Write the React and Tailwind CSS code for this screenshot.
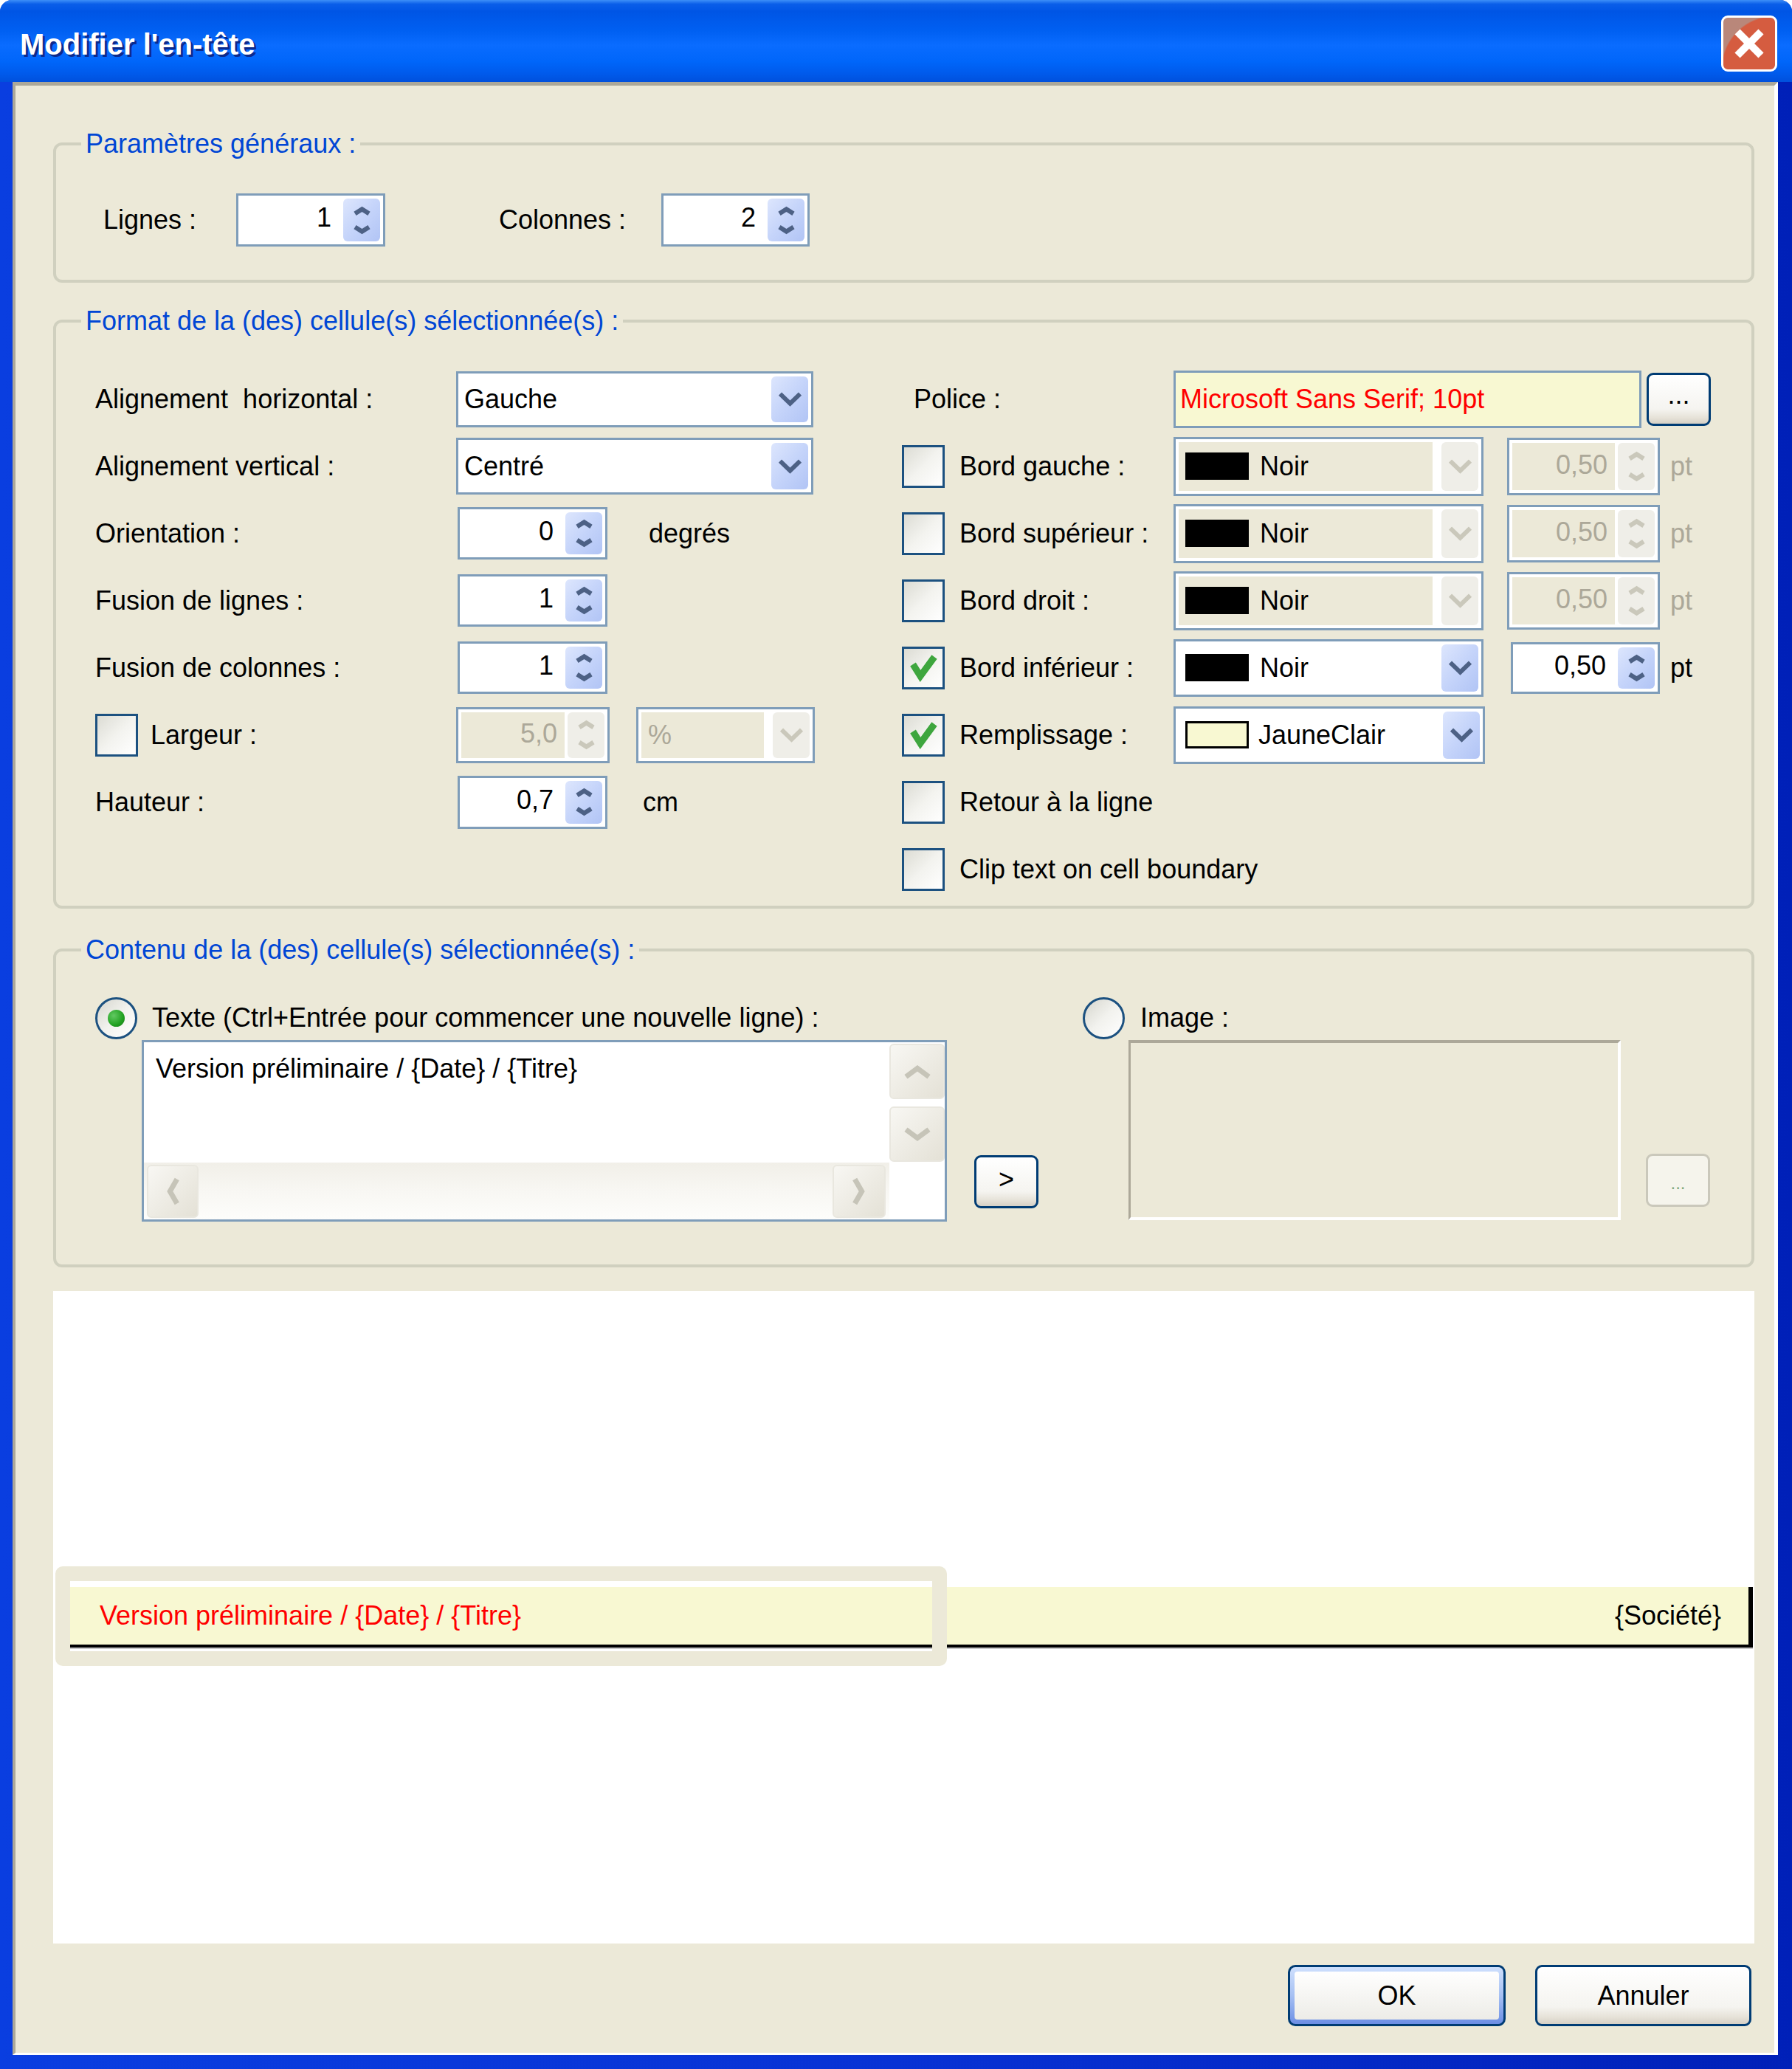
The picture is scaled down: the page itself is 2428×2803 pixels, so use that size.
import React from 'react';

const FONT = "font-['Liberation_Sans',Arial,sans-serif]";

// XP style chevron, drawn from the box size
function Chevron({ dir = 'down', w = 28, h = 18, stroke = 6, color = '#4d6185' }) {
  const a = stroke * 0.5;
  const b = stroke * 0.6;
  const t = stroke * 0.9;
  const paths = {
    down: `M${a} ${b} L${w / 2} ${h - t} L${w - a} ${b}`,
    up: `M${a} ${h - b} L${w / 2} ${t} L${w - a} ${h - b}`,
    left: `M${w - b} ${a} L${t} ${h / 2} L${w - b} ${h - a}`,
    right: `M${b} ${a} L${w - t} ${h / 2} L${b} ${h - a}`,
  };
  return (
    <svg width={w} height={h} viewBox={`0 0 ${w} ${h}`} className="overflow-visible">
      <path d={paths[dir]} fill="none" stroke={color} strokeWidth={stroke} strokeLinejoin="miter" />
    </svg>
  );
}

function SpinBox({ value, size, disabled }) {
  if (disabled) {
    return (
      <div className={`flex shrink-0 border-[3px] border-[#7f9db9] bg-white p-[4px] ${size}`}>
        <div className="flex flex-1 items-center justify-end bg-[#ece9d8] pr-[10px] pb-[4px] text-[#aca899]">{value}</div>
        <div className="ml-[4px] flex w-[50px] flex-col rounded-[6px] bg-[#efeee8]">
          <div className="flex flex-1 items-center justify-center pt-[3px]">
            <Chevron dir="up" w={25} h={15} stroke={6} color="#cac8bb" />
          </div>
          <div className="flex flex-1 items-center justify-center pb-[3px]">
            <Chevron dir="down" w={25} h={15} stroke={6} color="#cac8bb" />
          </div>
        </div>
      </div>
    );
  }
  return (
    <div className={`flex shrink-0 border-[3px] border-[#7f9db9] bg-white ${size}`}>
      <div className="flex flex-1 items-center justify-end pr-[16px] pb-[6px]">{value}</div>
      <div className="my-[4px] mr-[4px] flex w-[50px] flex-col rounded-[6px] bg-gradient-to-br from-[#dde6fd] via-[#c5d4fa] to-[#b1c4f5]">
        <div className="flex flex-1 items-center justify-center pt-[3px]">
          <Chevron dir="up" w={25} h={15} stroke={6} />
        </div>
        <div className="flex flex-1 items-center justify-center pb-[3px]">
          <Chevron dir="down" w={25} h={15} stroke={6} />
        </div>
      </div>
    </div>
  );
}

function DropButton({ disabled }) {
  return (
    <div
      className={`flex w-[50px] shrink-0 items-center justify-center rounded-[6px] ${
        disabled ? 'bg-[#efeee8]' : 'bg-gradient-to-br from-[#dde6fd] via-[#c5d4fa] to-[#b1c4f5]'
      }`}
    >
      <Chevron dir="down" w={33} h={22} stroke={6} color={disabled ? '#cac8bb' : '#4d6185'} />
    </div>
  );
}

function Combo({ size, children }) {
  return (
    <div className={`flex shrink-0 border-[3px] border-[#7f9db9] bg-white py-[4px] pr-[4px] ${size}`}>
      <div className="flex flex-1 items-center">{children}</div>
      <DropButton />
    </div>
  );
}

function DisabledCombo({ size, children }) {
  return (
    <div className={`flex shrink-0 border-[3px] border-[#7f9db9] bg-white p-[4px] ${size}`}>
      <div className="mr-[12px] flex flex-1 items-center bg-[#ece9d8]">{children}</div>
      <DropButton disabled />
    </div>
  );
}

function Checkbox({ checked }) {
  return (
    <div className="flex h-[58px] w-[58px] shrink-0 items-center justify-center border-[3px] border-[#1c5180] bg-gradient-to-br from-[#dcdcd4] via-[#f3f3ef] to-white">
      {checked && (
        <svg width="52" height="52" viewBox="0 0 52 52">
          <path d="M12 21 L22 37 L41 11" fill="none" stroke="#3ea63e" strokeWidth="9" strokeLinejoin="miter" />
        </svg>
      )}
    </div>
  );
}

function Radio({ checked }) {
  return (
    <div className="flex h-[57px] w-[57px] shrink-0 items-center justify-center rounded-full border-[3px] border-[#1c5180] bg-gradient-to-br from-[#d6d6ce] via-[#f2f2ee] to-white">
      {checked && (
        <div className="h-[23px] w-[23px] rounded-full bg-[radial-gradient(circle_at_35%_35%,#62c962,#21a121_60%,#177317)]" />
      )}
    </div>
  );
}

function XPButton({ className = '', children }) {
  return (
    <div
      className={`flex shrink-0 items-center justify-center rounded-[9px] border-[3px] border-[#003c74] bg-[linear-gradient(to_bottom,#ffffff_0%,#f5f4f0_70%,#e6e2d8_88%,#d6d0c5_100%)] ${className}`}
    >
      {children}
    </div>
  );
}

function ScrollButton({ dir, className = '' }) {
  const vertical = dir === 'up' || dir === 'down';
  return (
    <div
      className={`flex items-center justify-center rounded-[6px] border-[2px] border-[#e9e7df] bg-gradient-to-br from-[#f8f7f3] to-[#e4e1d6] ${className}`}
    >
      {vertical ? (
        <Chevron dir={dir} w={38} h={22} stroke={7} color="#c6c4b8" />
      ) : (
        <Chevron dir={dir} w={20} h={40} stroke={7} color="#c6c4b8" />
      )}
    </div>
  );
}

function Group({ title, className = '', children }) {
  return (
    <div className={`relative ml-[51px] mr-[27px] shrink-0 rounded-[12px] border-[4px] border-[#d0d0bf] ${className}`}>
      <span className="absolute -top-[24px] left-[34px] bg-[#ece9d8] px-[6px] leading-[44px] text-[#0046d5]">{title}</span>
      {children}
    </div>
  );
}

const Row = ({ className = '', children }) => (
  <div className={`flex h-[91px] items-center ${className}`}>{children}</div>
);

function Swatch({ light }) {
  return light ? (
    <div className="h-[37px] w-[86px] shrink-0 border-[3px] border-black bg-[#f8f8d2]" />
  ) : (
    <div className="h-[37px] w-[86px] shrink-0 bg-black" />
  );
}

function BorderRow({ label, checked, enabled }) {
  return (
    <Row>
      <Checkbox checked={checked} />
      <span className="ml-[20px] w-[290px]">{label}</span>
      {enabled ? (
        <Combo size="h-[78px] w-[420px]">
          <div className="ml-[13px] flex items-center">
            <Swatch />
            <span className="ml-[15px]">Noir</span>
          </div>
        </Combo>
      ) : (
        <DisabledCombo size="h-[80px] w-[420px]">
          <div className="ml-[9px] flex items-center">
            <Swatch />
            <span className="ml-[15px]">Noir</span>
          </div>
        </DisabledCombo>
      )}
      {enabled ? (
        <div className="ml-[37px]">
          <SpinBox value="0,50" size="h-[70px] w-[202px]" />
        </div>
      ) : (
        <div className="ml-[32px]">
          <SpinBox value="0,50" size="h-[78px] w-[207px]" disabled />
        </div>
      )}
      <span className={`ml-[14px] ${enabled ? 'text-black' : 'text-[#aca899]'}`}>pt</span>
    </Row>
  );
}

export default function App() {
  return (
    <div className={`${FONT} h-[2803px] w-[2428px] text-[36px] leading-[1.15] text-black`}>
      <div className="flex h-full w-full flex-col overflow-hidden rounded-t-[16px] bg-[linear-gradient(to_right,#0a3ee0,#0832d4_50%,#0020b8)]">
        {/* Title bar */}
        <div className="flex h-[111px] shrink-0 items-start bg-[linear-gradient(to_bottom,#3d8ff8_0%,#0a5ee9_5%,#0055e5_14%,#0060f2_38%,#0a6cff_55%,#0066fa_75%,#005aeb_90%,#0050dc_100%)]">
          <div className="ml-[27px] mt-[40px] text-[40px] font-bold leading-none text-white [text-shadow:3px_3px_0_#0c2a8c]">
            Modifier l'en-tête
          </div>
          <div className="ml-auto mr-[20px] mt-[21px] flex h-[76px] w-[76px] items-center justify-center rounded-[9px] border-[3px] border-white bg-[radial-gradient(circle_at_100%_100%,#d55c40_72%,#b9877a_74%)]">
            <svg width="42" height="42" viewBox="0 0 42 42">
              <path d="M5 5 L37 37 M37 5 L5 37" stroke="white" strokeWidth="10" />
            </svg>
          </div>
        </div>

        {/* Body */}
        <div className="flex flex-1 pb-[19px] pl-[17px] pr-[19px]">
          <div className="flex flex-1 flex-col border-b-[3px] border-l-[4px] border-r-[5px] border-t-[5px] border-b-white border-l-[#aca899] border-r-white border-t-[#aca899] bg-[#ece9d8]">
            {/* Paramètres généraux */}
            <Group title="Paramètres généraux :" className="mt-[77px] h-[190px] pt-[65px]">
              <div className="flex h-[72px] items-center pl-[64px]">
                <span className="w-[180px]">Lignes :</span>
                <SpinBox value="1" size="h-[72px] w-[202px]" />
                <span className="ml-[154px] w-[220px]">Colonnes :</span>
                <SpinBox value="2" size="h-[72px] w-[201px]" />
              </div>
            </Group>

            {/* Format */}
            <Group title="Format de la (des) cellule(s) sélectionnée(s) :" className="mt-[50px] h-[798px] pt-[58px]">
              <div className="flex pl-[53px]">
                <div className="flex w-[1093px] flex-col">
                  <Row>
                    <span className="w-[489px] whitespace-pre">Alignement  horizontal :</span>
                    <Combo size="h-[76px] w-[484px]">
                      <span className="pl-[8px]">Gauche</span>
                    </Combo>
                  </Row>
                  <Row>
                    <span className="w-[489px]">Alignement vertical :</span>
                    <Combo size="h-[77px] w-[484px]">
                      <span className="pl-[8px]">Centré</span>
                    </Combo>
                  </Row>
                  <Row>
                    <span className="w-[491px]">Orientation :</span>
                    <SpinBox value="0" size="h-[71px] w-[203px]" />
                    <span className="ml-[56px]">degrés</span>
                  </Row>
                  <Row>
                    <span className="w-[491px]">Fusion de lignes :</span>
                    <SpinBox value="1" size="h-[71px] w-[203px]" />
                  </Row>
                  <Row>
                    <span className="w-[491px]">Fusion de colonnes :</span>
                    <SpinBox value="1" size="h-[71px] w-[203px]" />
                  </Row>
                  <Row>
                    <Checkbox />
                    <span className="ml-[17px] w-[414px]">Largeur :</span>
                    <SpinBox value="5,0" size="h-[76px] w-[208px]" disabled />
                    <div className="ml-[36px]">
                      <DisabledCombo size="h-[76px] w-[242px]">
                        <span className="pl-[9px] text-[#aca899]">%</span>
                      </DisabledCombo>
                    </div>
                  </Row>
                  <Row>
                    <span className="w-[491px]">Hauteur :</span>
                    <SpinBox value="0,7" size="h-[72px] w-[203px]" />
                    <span className="ml-[48px]">cm</span>
                  </Row>
                </div>

                <div className="flex flex-1 flex-col">
                  <Row>
                    <span className="ml-[16px] w-[352px]">Police :</span>
                    <div className="flex h-[78px] w-[634px] shrink-0 items-center border-[3px] border-[#7f9db9] bg-[#f8f8d2] pl-[6px] text-[#ff0000]">
                      Microsoft Sans Serif; 10pt
                    </div>
                    <XPButton className="ml-[7px] h-[72px] w-[87px] pb-[12px]">...</XPButton>
                  </Row>
                  <BorderRow label="Bord gauche :" />
                  <BorderRow label="Bord supérieur :" />
                  <BorderRow label="Bord droit :" />
                  <BorderRow label="Bord inférieur :" checked enabled />
                  <Row>
                    <Checkbox checked />
                    <span className="ml-[20px] w-[290px]">Remplissage :</span>
                    <Combo size="h-[78px] w-[422px]">
                      <div className="ml-[13px] flex items-center">
                        <Swatch light />
                        <span className="ml-[13px]">JauneClair</span>
                      </div>
                    </Combo>
                  </Row>
                  <Row>
                    <Checkbox />
                    <span className="ml-[20px]">Retour à la ligne</span>
                  </Row>
                  <Row>
                    <Checkbox />
                    <span className="ml-[20px]">Clip text on cell boundary</span>
                  </Row>
                </div>
              </div>
            </Group>

            {/* Contenu */}
            <Group title="Contenu de la (des) cellule(s) sélectionnée(s) :" className="mt-[54px] h-[432px] pt-[62px]">
              <div className="flex pl-[53px]">
                <div className="flex w-[1338px] flex-col">
                  <div className="flex h-[57px] items-center">
                    <Radio checked />
                    <span className="ml-[20px] pb-[2px]">Texte (Ctrl+Entrée pour commencer une nouvelle ligne) :</span>
                  </div>
                  <div className="mt-[1px] flex items-end">
                    <div className="ml-[63px] grid h-[246px] w-[1091px] grid-cols-[1fr_75px] grid-rows-[1fr_77px] border-[3px] border-[#7f9db9] bg-white">
                      <div className="pl-[16px] pt-[11px] leading-[50px]">Version préliminaire / {'{Date}'} / {'{Titre}'}</div>
                      <div className="flex flex-col gap-[10px] pt-[2px]">
                        <ScrollButton dir="up" className="h-[75px]" />
                        <ScrollButton dir="down" className="h-[75px]" />
                      </div>
                      <div className="flex items-center justify-between bg-gradient-to-b from-[#f1efe8] via-[#f8f7f3] to-[#fdfdfb] pl-[4px] pr-[5px]">
                        <ScrollButton dir="left" className="h-[72px] w-[70px]" />
                        <ScrollButton dir="right" className="h-[72px] w-[72px]" />
                      </div>
                      <div className="bg-white" />
                    </div>
                    <XPButton className="mb-[18px] ml-[37px] h-[72px] w-[87px] pb-[6px]">&gt;</XPButton>
                  </div>
                </div>

                <div className="flex flex-1 flex-col">
                  <div className="flex h-[57px] items-center">
                    <Radio />
                    <span className="ml-[21px] pb-[2px]">Image :</span>
                  </div>
                  <div className="mt-[1px] flex items-end">
                    <div className="ml-[62px] h-[244px] w-[667px] border-b-[4px] border-l-[3px] border-r-[4px] border-t-[4px] border-b-white border-l-[#aca899] border-r-white border-t-[#aca899] bg-[#ece9d8]" />
                    <div className="mb-[18px] ml-[34px] flex h-[72px] w-[87px] items-center justify-center rounded-[9px] border-[3px] border-[#cac8bb] bg-[#f5f4ec] pt-[8px] text-[24px] text-[#7fa87c]">
                      ...
                    </div>
                  </div>
                </div>
              </div>
            </Group>

            {/* Preview */}
            <div className="relative ml-[51px] mr-[27px] mt-[32px] h-[884px] shrink-0 bg-white pt-[401px]">
              <div className="ml-[23px] mr-[2px] flex h-[82px] border-b-[4px] border-black bg-[#f8f8d2] shadow-[0_2px_0_#c9c9c9]">
                <div className="flex w-[1167px] items-center pl-[40px] text-[#ff0000]">
                  Version préliminaire / {'{Date}'} / {'{Titre}'}
                </div>
                <div className="flex flex-1 items-center justify-end border-r-[6px] border-black pr-[37px]">
                  {'{Société}'}
                </div>
              </div>
              <div className="absolute left-[3px] top-[373px] h-[135px] w-[1208px] rounded-[10px] border-[20px] border-[#ece9d8]" />
            </div>

            {/* Buttons */}
            <div className="mr-[31px] mt-[29px] flex justify-end">
              <div className="flex h-[83px] w-[295px] rounded-[10px] border-[3px] border-[#003c74] bg-gradient-to-b from-[#cfe0fd] via-[#a6c0f3] to-[#6c8ee4] p-[6px]">
                <div className="flex flex-1 items-center justify-center rounded-[4px] bg-gradient-to-b from-white to-[#edece7]">OK</div>
              </div>
              <XPButton className="ml-[40px] h-[83px] w-[293px]">Annuler</XPButton>
            </div>
          </div>
        </div>
      </div>
    </div>
  );
}
